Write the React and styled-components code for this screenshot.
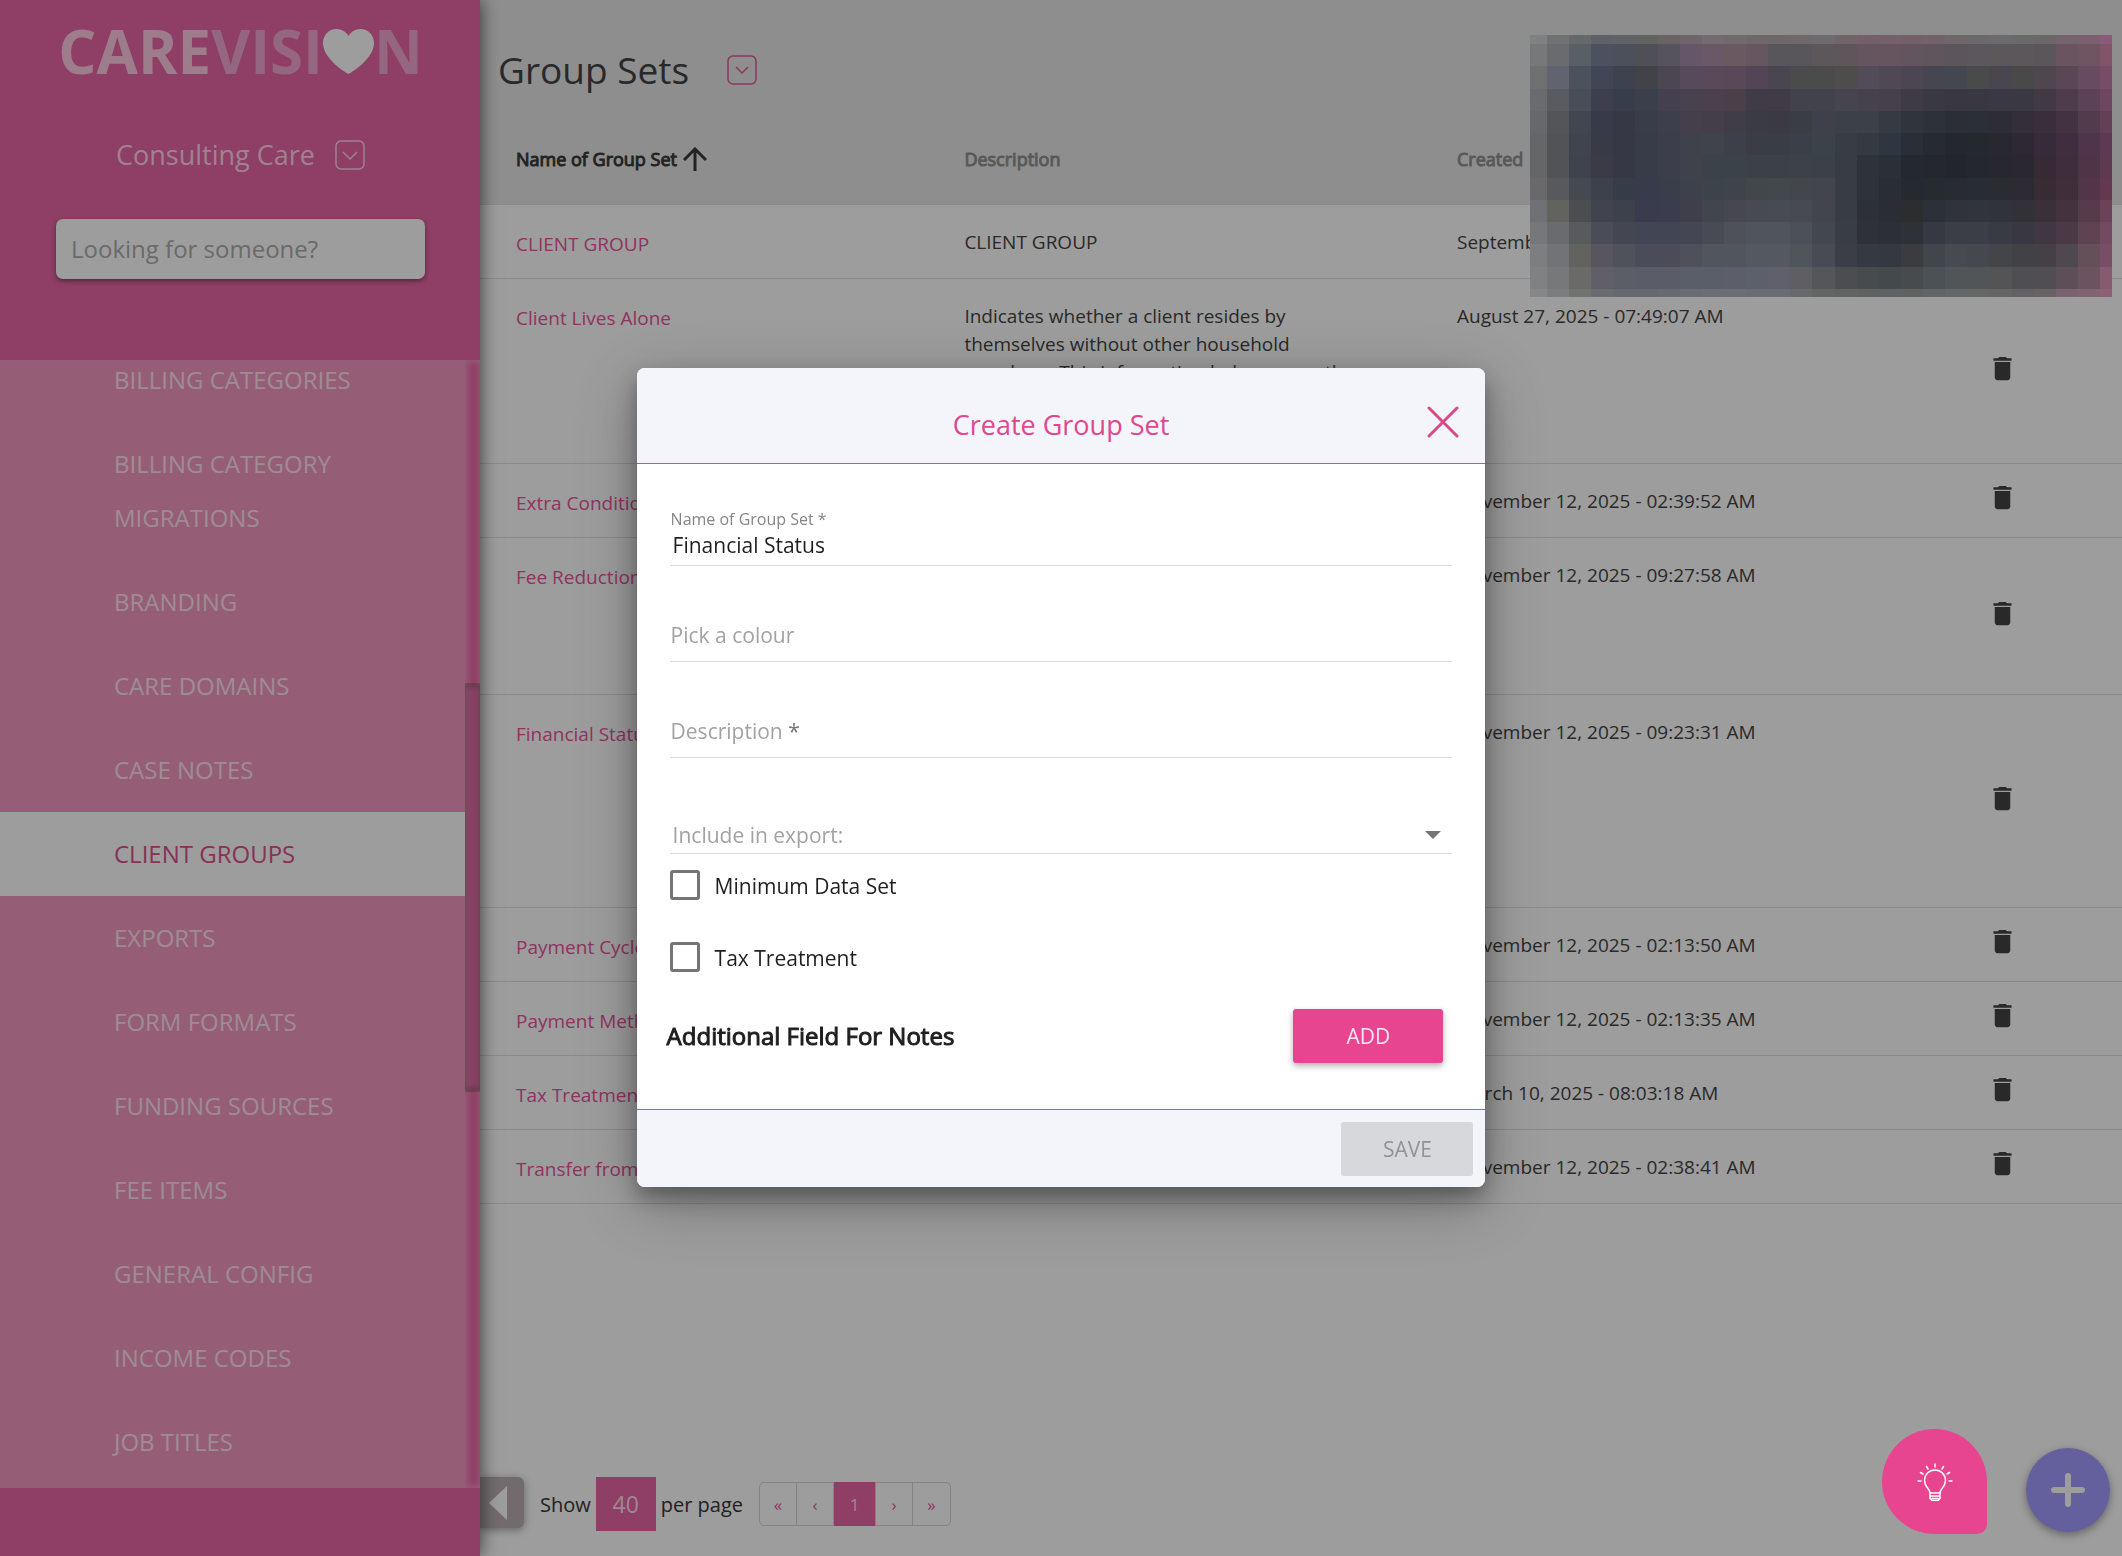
import React, { useState } from 'react';
import styled, { createGlobalStyle } from 'styled-components';
import { MdDelete } from 'react-icons/md';

const navItems = [
  'BILLING CATEGORIES',
  'BILLING CATEGORY MIGRATIONS',
  'BRANDING',
  'CARE DOMAINS',
  'CASE NOTES',
  'CLIENT GROUPS',
  'EXPORTS',
  'FORM FORMATS',
  'FUNDING SOURCES',
  'FEE ITEMS',
  'GENERAL CONFIG',
  'INCOME CODES',
  'JOB TITLES',
];

const groupSets = [
  { name: 'CLIENT GROUP', desc: 'CLIENT GROUP', created: 'September', lines: 1 },
  {
    name: 'Client Lives Alone',
    desc: 'Indicates whether a client resides by themselves without other household members. This information helps assess the',
    created: 'August 27, 2025 - 07:49:07 AM',
    lines: 5,
  },
  { name: 'Extra Conditions', created: 'November 12, 2025 - 02:39:52 AM', lines: 1 },
  { name: 'Fee Reduction', created: 'November 12, 2025 - 09:27:58 AM', lines: 4 },
  { name: 'Financial Status', created: 'November 12, 2025 - 09:23:31 AM', lines: 6 },
  { name: 'Payment Cycle', created: 'November 12, 2025 - 02:13:50 AM', lines: 1 },
  { name: 'Payment Method', created: 'November 12, 2025 - 02:13:35 AM', lines: 1 },
  { name: 'Tax Treatment', created: 'March 10, 2025 - 08:03:18 AM', lines: 1 },
  { name: 'Transfer from', created: 'November 12, 2025 - 02:38:41 AM', lines: 1 },
];

// one string per row of the pixelated block
const mosaic = [
  '808181 707173 646a6c 5e6268 606365 616361 686465 70656a 736b70 716a6d 6f686b 6d696b 6e6a6c 6f6a6d 706669 745f6a 75606b 75606a 72636a 6f686b 6c696c 6b6a6c 6b6a6b 6c686a 75646d 7c6070 8b5a78',
  '77787a 696b6e 596065 4d515f 4c505a 4e5056 57535d 66566a 6b5866 6b5962 66565f 58565b 59565b 5d565b 5e565b 65555f 66555f 63555f 60555d 5c565b 5c575c 5b575b 5b575a 5a565a 6a5460 6f5561 82546a',
  '6e7072 61636f 4c525b 414555 3e424f 424349 4b4651 574a5b 594a5a 594858 534555 494650 4b4b4b 4c4b4b 4f4c4c 524c58 504954 4c4652 464652 444650 494b4b 49464f 4a494a 4f4650 5b4656 664c5e 774c65',
  '6a6b6e 5a5b60 494d57 3d3f4e 373d4a 3a3f4b 45404f 48414e 4c404c 4b3f4a 413b46 403b45 42424c 42424c 46444f 46424b 45404a 3f3b45 3a3841 383742 383742 3a3842 3a3841 413a45 4e3c4b 5c4256 6e465f',
  '66686b 545558 42464f 383a49 363846 383d4a 3d3f4c 453e4b 443e49 413d47 3b3b43 3b3a42 3b3d44 3e4149 3c4149 3c4049 363b43 30353d 2d3139 2b2e37 2b2f37 2e2d37 332e38 392f3b 43323f 523b4c 643f55',
  '646668 525356 40444c 383a46 363845 383c49 3c3e4b 3f424b 3f434a 3c4049 3a3d44 393d44 3b3f47 3c4249 383d45 353941 30363f 292e37 262a33 24272f 24282f 292831 2d2832 362b38 402d3d 50354a 5e3951',
  '656668 515356 3f434b 3a3b47 363845 383c49 3d3e4c 3f424a 3c4249 3c4249 3b4147 3b4147 3c4248 3c4148 383c45 2e323a 2b2f37 24292f 24272e 22252c 24272e 28272f 2b2731 362b35 402d3b 4f3346 5e3950',
  '69696c 58595c 454a50 3c414b 373c49 373b4b 3a3e4b 3d414b 3d434a 3f444a 41474a 42484b 43474c 42454c 383c44 2e3239 292d34 242a30 262b30 282c32 282c33 2b2c32 2e2a33 372c34 412e3b 523648 64394f',
  '707174 62625f 4a4e51 41444f 3d414c 3a3c4e 3b3d4f 3f3f4c 41464d 464750 484a53 494b53 474a51 42454c 383c44 2d3037 2a2d33 2b2d2f 2c3038 30333a 31343a 31333b 323138 3a303a 45323f 563c4b 6c4259',
  '76777a 6a6b6e 585a5c 4a4c58 444752 424654 424654 444753 484b54 4e5159 50545c 50545c 4c5058 434750 393d46 2e3139 2c2f37 2e3138 363941 3b3e47 3b3e46 383b43 383742 403743 4b3a46 604353 734a62',
  '7d7e80 727376 62625f 58555f 4f5259 4b4c59 4b4c58 4f515a 51555d 51565e 545860 545860 50545b 484b55 3b3e47 353941 343941 3a3c3f 41454c 474a51 45484e 434548 414146 454046 504850 645058 774e66',
  '808183 77787a 6a6b69 605f69 5b5e67 5a5d68 5a5d67 5a5e69 5a5e68 5c5f6a 5b606a 60606c 5e5e63 55565a 4b4d51 474b4e 44494c 484b4e 4c5155 515558 525557 545456 4f4e53 504e53 5c4f57 6b5460 865b72',
  '868788 7c7d7e 717371 6a6b70 666a70 666972 666a72 696d76 6b6e74 6b6e74 696c76 696c74 68696b 636565 626464 606262 5f6263 606262 626566 646767 656767 666565 636163 696264 7a6370 7f6470 8b6176',
];

export default function App() {
  const [name, setName] = useState('Financial Status');

  return (
    <>
      <GlobalStyle />
      <SPage>
        <SSidebar>
          <SSidebarTop>
            <SLogo aria-label="Carevision">
              <SLogoCare>CARE</SLogoCare>
              <SLogoVision>VISI</SLogoVision>
              <Heart />
              <SLogoVision>N</SLogoVision>
            </SLogo>
            <SCompany>
              Consulting Care
              <SIconButton aria-label="Switch company" $color="#ffd0e4">
                <BoxChevron wide />
              </SIconButton>
            </SCompany>
            <SSearch type="search" aria-label="Search" placeholder="Looking for someone?" />
          </SSidebarTop>
          <SNavArea>
            <SNav>
              {navItems.map((item) => (
                <SNavLink key={item} href="#" $active={item === 'CLIENT GROUPS'}>
                  <SNavText>{item}</SNavText>
                </SNavLink>
              ))}
            </SNav>
            <STrack>
              <SThumb />
            </STrack>
          </SNavArea>
          <SSidebarBottom />
        </SSidebar>

        <SMain>
          <STitleBar>
            <STitle>Group Sets</STitle>
            <SIconButton aria-label="Group set options" $color="#e0478e">
              <BoxChevron />
            </SIconButton>
          </STitleBar>
          <STable>
            <colgroup>
              <SCol $width="29.5%" />
              <SCol $width="30%" />
              <SCol $width="32.4%" />
              <SCol $width="8.1%" />
            </colgroup>
            <thead>
              <tr>
                <STh $active>
                  <SSort>
                    Name of Group Set
                    <svg width="24" height="24" viewBox="0 0 24 24" fill="none" stroke="#262626" strokeWidth="3">
                      <path d="M12 24V3M1 13 12 2l11 11" />
                    </svg>
                  </SSort>
                </STh>
                <STh>Description</STh>
                <STh>Created</STh>
                <STh aria-label="Actions" />
              </tr>
            </thead>
            <tbody>
              {groupSets.map((set) => (
                <SRow key={set.name} $lines={set.lines}>
                  <SNameCell>
                    <a href="#">{set.name}</a>
                  </SNameCell>
                  <STd>{set.desc}</STd>
                  <STd>{set.created}</STd>
                  <SActionCell>
                    <SDelete aria-label={`Delete ${set.name}`}>
                      <MdDelete size={31} />
                    </SDelete>
                  </SActionCell>
                </SRow>
              ))}
            </tbody>
          </STable>

          <SFooter>
            <SCollapse aria-label="Collapse menu">
              <svg width="18" height="34" viewBox="0 0 18 34" fill="#fff">
                <path d="M18 0v34L0 17z" />
              </svg>
            </SCollapse>
            <SPerPage>
              <label htmlFor="per-page">Show</label>
              <SPerPageSelect id="per-page" defaultValue="40">
                <option>40</option>
              </SPerPageSelect>
              per page
            </SPerPage>
            <SPager aria-label="Pages">
              <SPageButton>«</SPageButton>
              <SPageButton>‹</SPageButton>
              <SPageButton $active>1</SPageButton>
              <SPageButton>›</SPageButton>
              <SPageButton>»</SPageButton>
            </SPager>
          </SFooter>
        </SMain>
        <SAdd aria-label="New">
          <svg width="34" height="34" viewBox="0 0 34 34" stroke="#fff" strokeWidth="6" strokeLinecap="round">
            <path d="M17 3v28M3 17h28" />
          </svg>
        </SAdd>
      </SPage>

      <SBackdrop>
        <SDialog role="dialog" aria-labelledby="dialog-title">
          <SDialogHeader>
            <SDialogTitle id="dialog-title">Create Group Set</SDialogTitle>
            <SClose aria-label="Close">
              <svg width="32" height="32" viewBox="0 0 32 32" stroke="#d9498a" strokeWidth="3" strokeLinecap="round">
                <path d="m2 2 28 28M30 2 2 30" />
              </svg>
            </SClose>
          </SDialogHeader>
          <SDialogBody>
            <SField>
              <SSmallLabel htmlFor="name">Name of Group Set *</SSmallLabel>
              <SLine $bottom={5}>
                <SInput id="name" value={name} onChange={(e) => setName(e.target.value)} />
              </SLine>
            </SField>
            <SField>
              <SLine $bottom={11}>
                <SLabel htmlFor="colour">Pick a colour</SLabel>
                <SInput id="colour" />
              </SLine>
            </SField>
            <SField>
              <SLine $bottom={11}>
                <SLabel htmlFor="description">
                  Description <SStar>*</SStar>
                </SLabel>
                <SInput id="description" />
              </SLine>
            </SField>
            <SField>
              <SLine $bottom={3}>
                <SSelect aria-label="Include in export">
                  <option>Include in export:</option>
                </SSelect>
                <SCaret width="16" height="8" viewBox="0 0 16 8" fill="#757575">
                  <path d="M0 0h16L8 8z" />
                </SCaret>
              </SLine>
            </SField>
            <SChecks>
              <SCheck>
                <SCheckbox type="checkbox" />
                <SCheckText>Minimum Data Set</SCheckText>
              </SCheck>
              <SCheck>
                <SCheckbox type="checkbox" />
                <SCheckText>Tax Treatment</SCheckText>
              </SCheck>
            </SChecks>
            <SNotes>
              <SNotesTitle>Additional Field For Notes</SNotesTitle>
              <SAddButton>ADD</SAddButton>
            </SNotes>
          </SDialogBody>
          <SDialogFooter>
            <SSaveButton disabled>SAVE</SSaveButton>
          </SDialogFooter>
        </SDialog>
      </SBackdrop>

      <SMosaic aria-hidden="true">
        {mosaic.map((row, y) =>
          row.split(' ').map((color, x) => <span key={`${y}-${x}`} style={{ background: `#${color}` }} />)
        )}
      </SMosaic>

      <STips aria-label="Tips">
        <Bulb />
      </STips>
    </>
  );
}

const Heart = () => (
  <svg width="51" height="45" viewBox="0 0 51 45" fill="#fff">
    <path d="M25.500 45C20 42 0 29 0 14 0 6 6 0 13.500 0 19 0 23 3 25.500 7 28 3 32 0 37.500 0 45 0 51 6 51 14 51 29 31 42 25.500 45z" />
  </svg>
);

const BoxChevron = ({ wide }) => (
  <svg width="30" height="30" viewBox="0 0 30 30" fill="none" stroke="currentColor" strokeWidth="1.500">
    <rect x="1" y="1" width="28" height="28" rx="5" />
    <path d={wide ? 'M8 12l7 7 7-7' : 'M9 12l6 6 6-6'} />
  </svg>
);

const Bulb = () => (
  <svg width="36" height="38" viewBox="0 0 36 38" fill="none" stroke="#fff" strokeWidth="1.500" strokeLinecap="round">
    <path d="M13 30c0-4-5.500-6-5.500-12.500a10.500 10.500 0 0 1 21 0C28.500 24 23 26 23 30z" />
    <path d="M13 30v5.500l2 2h6l2-2V30M13 33h10M15 35.500h6" />
    <path d="M18 1v3M9.500 3.500l1.500 2.500M26.500 3.500 25 6M3.500 9.500 6 11M32.500 9.500 30 11M1 18h3M32 18h3" />
  </svg>
);

const GlobalStyle = createGlobalStyle`
  * {
    box-sizing: border-box;
  }

  body {
    margin: 0;
    font-family: 'Open Sans', sans-serif;
    color: #303030;
    background: #fff;
  }

  button, input, select {
    font-family: inherit;
    margin: 0;
  }

  button {
    border: 0;
    padding: 0;
    background: none;
    cursor: pointer;
  }

  a {
    text-decoration: none;
  }

  svg {
    display: block;
    flex: none;
  }
`;

const SPage = styled.div`
  display: flex;
  height: 100vh;
  overflow: hidden;
`;

const SSidebar = styled.aside`
  position: relative;
  z-index: 1;
  display: flex;
  flex-direction: column;
  flex: none;
  width: 480px;
  background: #e7579c;
  box-shadow: 2px 0 16px rgba(0, 0, 0, 0.6);
`;

const SSidebarTop = styled.div`
  display: flex;
  flex-direction: column;
  align-items: center;
  height: 360px;
  padding: 21px 55px 0 56px;
`;

const SLogo = styled.div`
  display: flex;
  align-items: center;
  height: 60px;
  font-size: 60px;
  font-weight: 700;
  line-height: 60px;
`;

const SLogoCare = styled.span`
  color: #ffc4e0;
`;

const SLogoVision = styled.span`
  color: #f19dcb;
`;

const SCompany = styled.div`
  display: flex;
  align-items: center;
  gap: 20px;
  margin-top: 55px;
  color: #ffd0e4;
  font-size: 27px;
  line-height: 38px;
`;

const SIconButton = styled.button`
  color: ${(props) => props.$color};
`;

const SSearch = styled.input`
  width: 100%;
  height: 60px;
  margin-top: 45px;
  padding: 0 15px 2px;
  border: 0;
  border-radius: 7px;
  background: #fff;
  box-shadow: 0 2px 5px rgba(0, 0, 0, 0.5);
  font-size: 24px;

  &::placeholder {
    color: #a5a5a5;
  }
`;

const SNavArea = styled.div`
  display: flex;
  flex: 1;
  min-height: 0;
  background: #f28eb9;
`;

const SNav = styled.nav`
  display: flex;
  flex-direction: column;
  justify-content: flex-end;
  flex: 1;
  overflow: hidden;
  padding-bottom: 4px;
`;

const SNavLink = styled.a`
  flex: none;
  padding: 15px 84px 15px 114px;
  color: ${(props) => (props.$active ? '#d8407f' : '#ffe0ee')};
  background: ${(props) => (props.$active ? '#fff' : 'none')};
  font-size: 24px;
  line-height: 54px;
`;

const SNavText = styled.span`
  display: block;
`;

const STrack = styled.div`
  display: grid;
  grid-template-rows: 323fr 409fr 396fr;
  width: 15px;
  background: #e7579c;
  box-shadow: inset 1px 0 6px 2px #f28eb9;
`;

const SThumb = styled.div`
  grid-row: 2;
  border: solid rgba(80, 60, 70, 0.3);
  border-width: 3px 0;
  background: rgba(150, 80, 110, 0.15);
  box-shadow: inset 0 0 6px rgba(60, 60, 60, 0.6);
`;

const SSidebarBottom = styled.div`
  height: 68px;
`;

const SMain = styled.main`
  display: flex;
  flex-direction: column;
  flex: 1;
  min-width: 0;
`;

const STitleBar = styled.header`
  display: flex;
  align-items: center;
  gap: 38px;
  height: 115px;
  padding: 24px 18px 0;
  background: #e5e5e5;
`;

const STitle = styled.h1`
  margin: 0;
  font-size: 37px;
  font-weight: 400;
`;

const STable = styled.table`
  width: 100%;
  table-layout: fixed;
  border-collapse: separate;
  border-spacing: 0;
  font-size: 19px;
  line-height: 28px;
`;

const SCol = styled.col`
  width: ${(props) => props.$width};
`;

const STh = styled.th`
  height: 90px;
  padding: 0 0 2px;
  background: #e5e5e5;
  border-bottom: 1px solid #dcdcdc;
  color: ${(props) => (props.$active ? '#262626' : '#878787')};
  font-size: 18px;
  font-weight: 400;
  text-align: left;
  -webkit-text-stroke: 1px;

  &:first-child {
    padding-left: 36px;
  }
`;

const SSort = styled.div`
  display: flex;
  align-items: center;
  gap: 6px;
`;

const SRow = styled.tr`
  height: ${(props) => Math.max(74, props.$lines * 28 + 45)}px;
`;

const STd = styled.td`
  padding: 23px 80px 21px 0;
  border-bottom: 1px solid #dcdcdc;
  vertical-align: top;
`;

const SNameCell = styled(STd)`
  padding: 25px 0 19px 36px;

  a {
    color: #e84393;
  }
`;

const SActionCell = styled(STd)`
  padding: 0 0 6px;
  vertical-align: middle;
`;

const SDelete = styled.button`
  display: block;
  margin-left: -2px;
  color: #313131;
`;

const SFooter = styled.footer`
  display: flex;
  align-items: center;
  margin-top: auto;
  padding-bottom: 25px;
  font-size: 20px;
`;

const SCollapse = styled.button`
  display: flex;
  align-items: center;
  align-self: flex-start;
  width: 44px;
  height: 51px;
  padding-left: 9px;
  border-radius: 0 6px 6px 0;
  background: #b3a6ab;
  box-shadow: 0 2px 8px rgba(0, 0, 0, 0.4);
`;

const SPerPage = styled.div`
  display: flex;
  align-items: center;
  gap: 5px;
  margin-left: 16px;
  color: #222;
`;

const SPerPageSelect = styled.select`
  appearance: none;
  width: 60px;
  height: 54px;
  border: 0;
  border-radius: 0;
  background: #e7579c;
  color: #ffd9ea;
  font-size: 23px;
  text-align: center;
  text-align-last: center;
`;

const SPager = styled.nav`
  display: flex;
  height: 44px;
  margin-left: 16px;
  border: 1px solid #d0d0d0;
  border-radius: 5px;
`;

const SPageButton = styled.button`
  width: ${(props) => (props.$active ? 42 : 37)}px;
  margin: ${(props) => (props.$active ? '-1px 0' : '0')};
  border-right: 1px solid #d0d0d0;
  background: ${(props) => (props.$active ? '#e7579c' : 'none')};
  color: ${(props) => (props.$active ? '#ffd9ea' : '#e84393')};
  font-size: 17px;

  &:last-child {
    border-right: 0;
  }
`;

const SAdd = styled.button`
  position: fixed;
  right: 12px;
  bottom: 24px;
  display: grid;
  place-items: center;
  width: 84px;
  height: 84px;
  border-radius: 50%;
  background: #9a90ff;
  box-shadow: 0 3px 8px rgba(0, 0, 0, 0.4);
`;

const SBackdrop = styled.div`
  position: fixed;
  inset: 0;
  z-index: 2;
  display: flex;
  align-items: center;
  justify-content: center;
  padding-bottom: 2px;
  background: rgba(33, 33, 33, 0.44);
`;

const SDialog = styled.section`
  width: 40%;
  min-width: 600px;
  border-radius: 8px;
  overflow: hidden;
  background: #fff;
  color: #1f1f1f;
  box-shadow: 0 10px 20px rgba(0, 0, 0, 0.3), 0 16px 60px rgba(0, 0, 0, 0.3);
`;

const SDialogHeader = styled.header`
  display: grid;
  grid-template-columns: 1fr auto 1fr;
  align-items: center;
  height: 96px;
  padding: 14px 26px 0;
  border-bottom: 1px solid #c2568f;
  background: #f3f5fa;
`;

const SDialogTitle = styled.h2`
  grid-column: 2;
  margin: 0;
  padding-top: 4px;
  color: #e0478e;
  font-size: 27px;
  font-weight: 400;
`;

const SClose = styled.button`
  justify-self: end;
`;

const SDialogBody = styled.div`
  padding: 6px 33px 46px;
  font-size: 21px;
`;

const SField = styled.div`
  display: flex;
  flex-direction: column;
  justify-content: flex-end;
  height: 96px;
`;

const SLine = styled.div`
  display: flex;
  align-items: center;
  padding-bottom: ${(props) => props.$bottom}px;
  border-bottom: 1px solid #dcdcdc;
`;

const SSmallLabel = styled.label`
  padding-left: 1px;
  color: #858585;
  font-size: 16px;
  line-height: 22px;
`;

const SLabel = styled.label`
  padding-left: 1px;
  color: #a2a2a2;
  line-height: 30px;
  white-space: nowrap;
`;

const SStar = styled.span`
  color: #757575;
`;

const SInput = styled.input`
  flex: 1;
  min-width: 0;
  height: 30px;
  padding: 0 3px;
  border: 0;
  outline: 0;
  background: none;
  color: #1f1f1f;
  font-size: 21px;
`;

const SSelect = styled.select`
  appearance: none;
  flex: 1;
  height: 30px;
  padding: 0 3px;
  border: 0;
  background: none;
  color: #a2a2a2;
  font-size: 21px;
`;

const SCaret = styled.svg`
  margin-right: 11px;
`;

const SChecks = styled.div`
  display: flex;
  flex-direction: column;
  gap: 10px;
`;

const SCheck = styled.label`
  display: flex;
  align-items: center;
  gap: 15px;
  height: 62px;
`;

const SCheckText = styled.span`
  padding-top: 3px;
`;

const SCheckbox = styled.input`
  appearance: none;
  width: 30px;
  height: 30px;
  margin: 0;
  border: 3px solid #757575;
  border-radius: 3px;
`;

const SNotes = styled.div`
  display: flex;
  align-items: center;
  justify-content: space-between;
  margin: 21px 9px 0 -3px;
`;

const SNotesTitle = styled.h3`
  margin: 0;
  font-size: 24px;
  font-weight: 400;
  -webkit-text-stroke: 1px;
`;

const SAddButton = styled.button`
  width: 150px;
  height: 54px;
  border-radius: 3px;
  background: #e84590;
  box-shadow: 0 3px 6px rgba(0, 0, 0, 0.3);
  color: #ffe6f2;
  font-size: 21px;
`;

const SDialogFooter = styled.footer`
  display: flex;
  justify-content: flex-end;
  padding: 12px 12px 11px;
  border-top: 1px solid #c2568f;
  background: #f3f5fa;
`;

const SSaveButton = styled.button`
  width: 132px;
  height: 54px;
  border-radius: 3px;
  background: #d7d8dc;
  color: #929292;
  font-size: 21px;
`;

const SMosaic = styled.div`
  position: fixed;
  top: 35px;
  right: 10px;
  z-index: 3;
  display: grid;
  grid-template-columns: 17px repeat(25, 1fr) 12px;
  grid-template-rows: 9px repeat(11, 1fr) 8px;
  width: 582px;
  height: 262px;
`;

const STips = styled.button`
  position: fixed;
  right: 135px;
  bottom: 22px;
  z-index: 3;
  display: grid;
  place-items: center;
  width: 105px;
  height: 105px;
  border-radius: 50% 50% 10px 50%;
  background: #e84590;
`;
